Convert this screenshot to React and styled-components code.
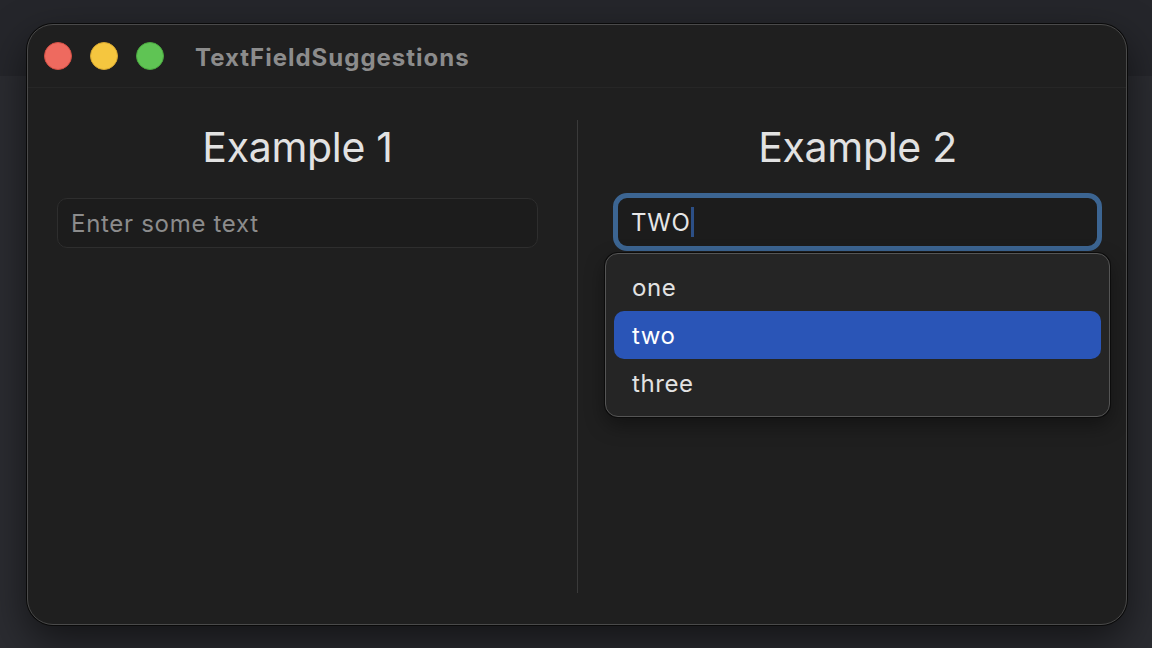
import React from 'react';
import styled, { createGlobalStyle } from 'styled-components';

const Global = createGlobalStyle`
  html, body {
    margin: 0;
    padding: 0;
    width: 1152px;
    height: 648px;
    overflow: hidden;
  }
  body {
    background: linear-gradient(to bottom, #25262b 0, #25262b 76px, #2b2c31 76px, #2b2c31 100%);
    font-family: Inter, "Open Sans", "Liberation Sans", sans-serif;
    -webkit-font-smoothing: antialiased;
  }
`;

const Desktop = styled.div`
  padding: 24px 0 0 27px;
`;

const Window = styled.div`
  width: 1100px;
  height: 601px;
  box-sizing: border-box;
  background: #1f1f1f;
  border-radius: 26px;
  border: 1px solid #4a4a4a;
  box-shadow: 0 0 0 1px #0a0a0a, 0 16px 40px rgba(0, 0, 0, 0.55);
  display: flex;
  flex-direction: column;
  overflow: hidden;
`;

const TitleBar = styled.div`
  height: 62px;
  flex: none;
  display: flex;
  align-items: center;
  padding-left: 16px;
  border-bottom: 1px solid #262626;
`;

const Lights = styled.div`
  display: flex;
  gap: 18px;
  margin-right: 31px;
`;

const Light = styled.span`
  width: 28px;
  height: 28px;
  border-radius: 50%;
  box-sizing: border-box;
  background: ${p => p.color};
  border: 1px solid ${p => p.edge};
`;

const Title = styled.div`
  font-size: 24px;
  font-weight: 700;
  color: #8c8c8c;
  letter-spacing: 1px;
  margin-top: 2px;
`;

const Content = styled.div`
  flex: 1;
  display: grid;
  grid-template-columns: 549px 1px 1fr;
  padding: 32px 0 31px;
`;

const Divider = styled.div`
  background: #3a3a3a;
`;

const Column = styled.div`
  display: flex;
  flex-direction: column;
  align-items: stretch;
  padding: ${p => p.right ? '0 24px 0 35px' : '0 39px 0 29px'};
  position: relative;
`;

const Heading = styled.h1`
  margin: 0;
  font-weight: 400;
  font-size: 41px;
  line-height: 54px;
  color: #e2e2e2;
  text-align: center;
  letter-spacing: -0.3px;
`;

const Field = styled.div`
  margin-top: ${p => p.focused ? '19px' : '24px'};
  height: ${p => p.focused ? '58px' : '50px'};
  box-sizing: border-box;
  border-radius: ${p => p.focused ? '14px' : '10px'};
  background: #1c1c1c;
  border: ${p => p.focused ? '5px solid #3c6592' : '1px solid #2e2e2e'};
  display: flex;
  align-items: center;
  padding-left: 13px;
  font-size: 24px;
  letter-spacing: 0.7px;
  color: ${p => p.placeholder ? '#8c8c8c' : '#e6e6e6'};
`;

const Caret = styled.span`
  display: inline-block;
  width: 3px;
  height: 30px;
  margin-left: 0;
  background: #2c4f86;
`;

const Menu = styled.div`
  position: absolute;
  left: 27px;
  right: 16px;
  top: 133px;
  height: 164px;
  box-sizing: border-box;
  background: #252525;
  border: 1px solid #555555;
  border-radius: 13px;
  box-shadow: 0 0 0 1px #0c0c0c, 0 8px 20px rgba(0, 0, 0, 0.4);
  padding: 9px 8px;
  display: flex;
  flex-direction: column;
`;

const Item = styled.div`
  height: 48px;
  border-radius: 10px;
  display: flex;
  align-items: center;
  padding-left: 18px;
  font-size: 24px;
  letter-spacing: 0.6px;
  color: ${p => p.active ? '#ffffff' : '#e2e2e2'};
  background: ${p => p.active ? '#2a55b7' : 'transparent'};
`;

const suggestions = ['one', 'two', 'three'];

export default function App() {
  return (
    <>
      <Global />
      <Desktop>
        <Window>
          <TitleBar>
            <Lights>
              <Light color="#ee6a5f" edge="#d25045" />
              <Light color="#f5c63f" edge="#d6a630" />
              <Light color="#5fc454" edge="#4aa83f" />
            </Lights>
            <Title>TextFieldSuggestions</Title>
          </TitleBar>
          <Content>
            <Column>
              <Heading>Example 1</Heading>
              <Field placeholder>Enter some text</Field>
            </Column>
            <Divider />
            <Column right>
              <Heading>Example 2</Heading>
              <Field focused>TWO<Caret /></Field>
              <Menu>
                {suggestions.map(s => (
                  <Item key={s} active={s === 'two'}>{s}</Item>
                ))}
              </Menu>
            </Column>
          </Content>
        </Window>
      </Desktop>
    </>
  );
}
